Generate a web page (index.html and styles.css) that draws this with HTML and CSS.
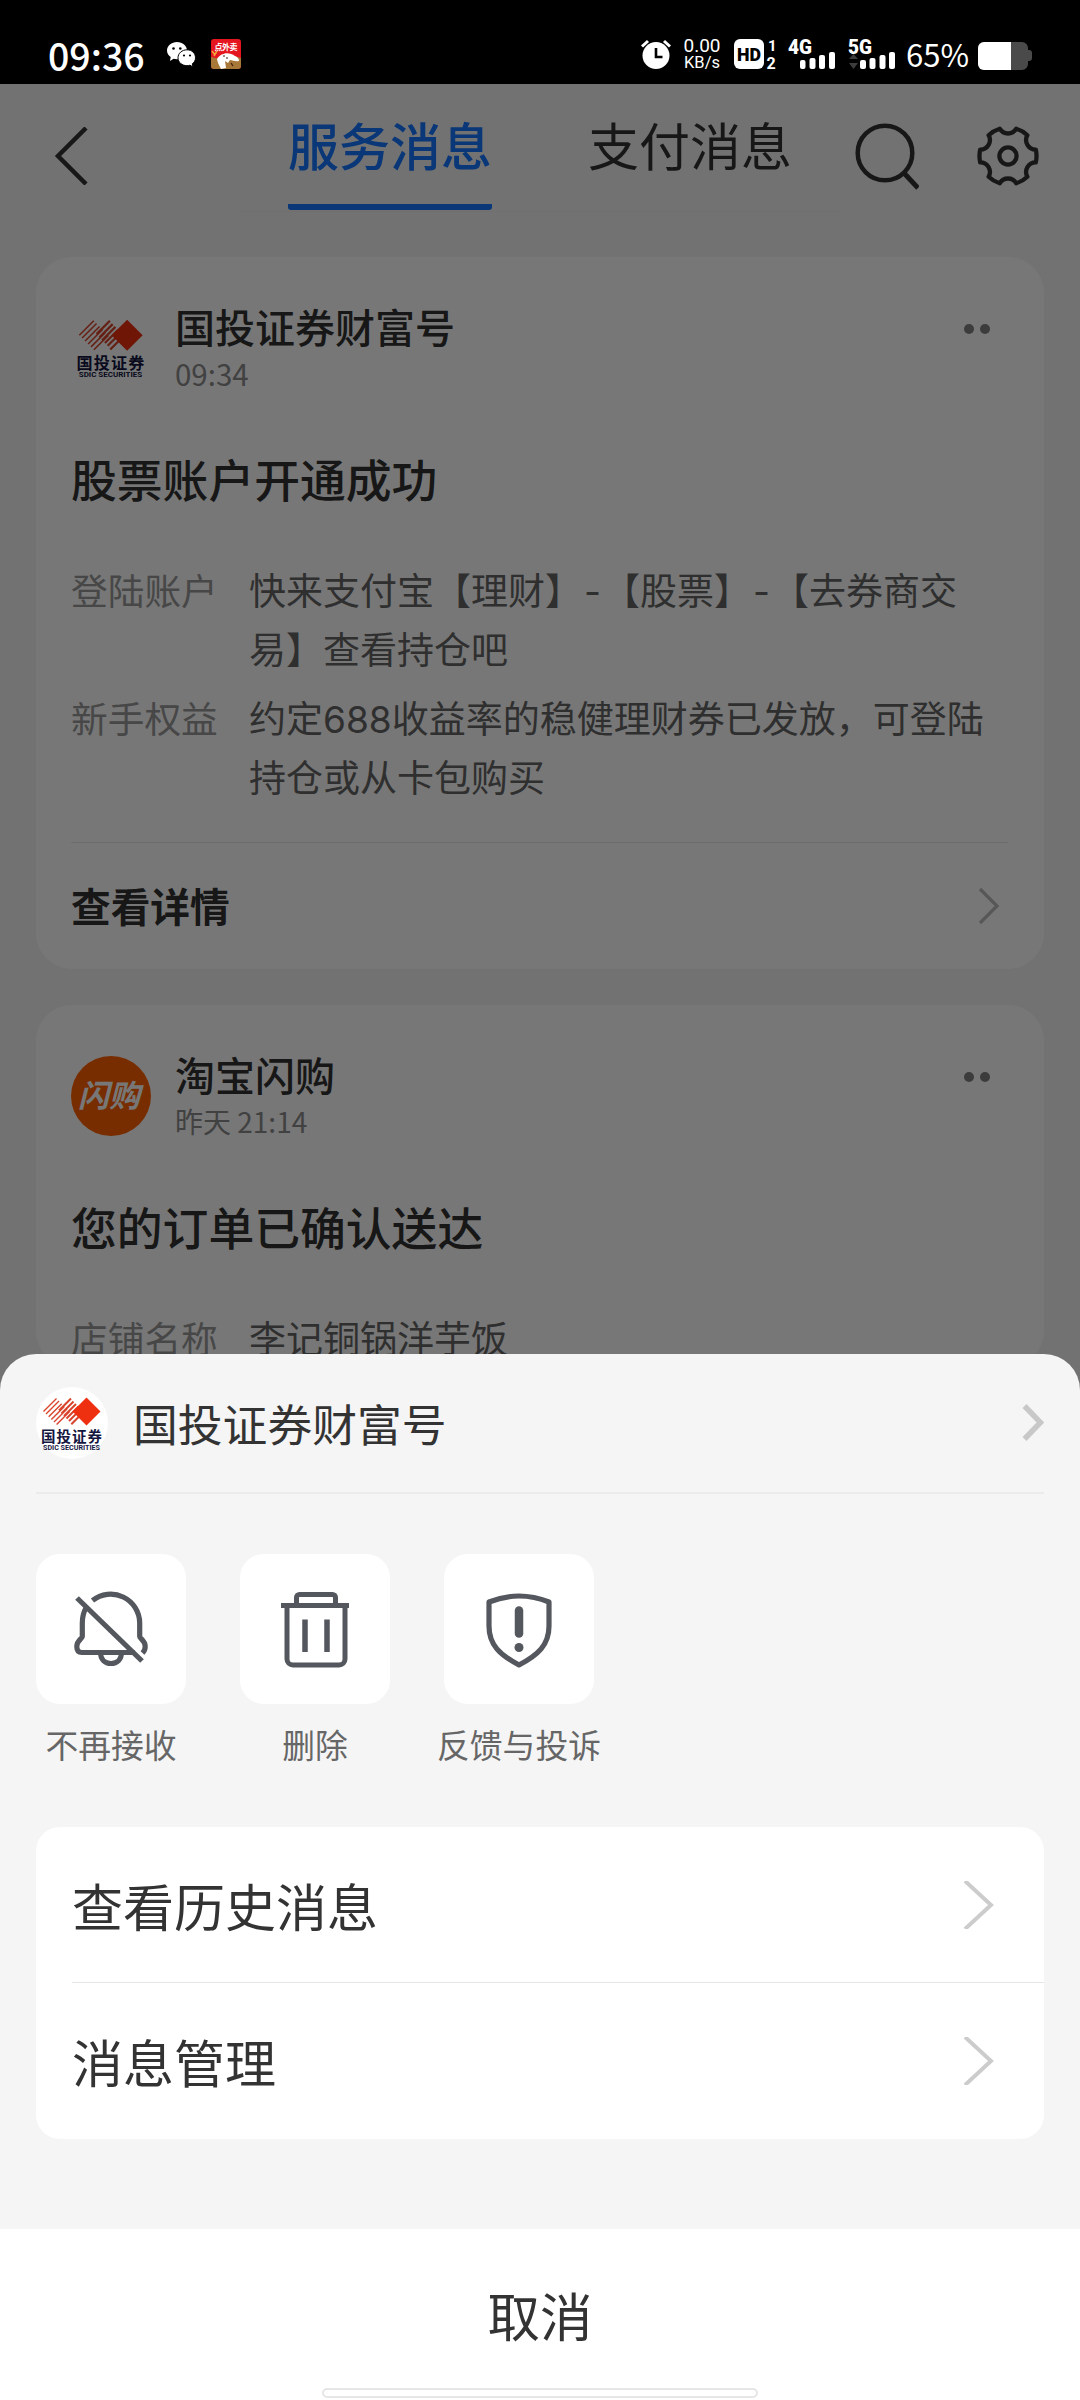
FILE: index.html
```html
<!DOCTYPE html>
<html lang="zh-CN">
<head>
<meta charset="utf-8">
<title>服务消息</title>
<link rel="stylesheet" href="styles.css">
</head>
<body>
<svg class="defs" width="0" height="0">
  <defs>
    <symbol id="sdic" viewBox="0 0 72 72">
      <circle cx="36" cy="36" r="36" fill="#fff"/>
      <g stroke="#d9452c" stroke-width="1.4" fill="none">
        <path d="M7.5 24.5l13-13M10 27l13-13M12.7 29.7l13-13M15.4 32.4l13-13M18 35l13-13M20.6 37.6l13-13"/>
        <path d="M23 23.500l12-12M25.500 26.500l12-12M28 29l12-12M30.500 31.500l12-12M33 34l10-10M35.300 37.300l9-9" stroke-width="2"/>
      </g>
      <path d="M50.500 10.500l14 14-14 14-14-14z" fill="#ee2f10"/>
      <text x="5" y="54.500" font-size="14.500" font-weight="600" textLength="61" fill="#14163f">国投证券</text>
      <text class="latin" x="7" y="62.500" font-size="7" font-weight="700" textLength="57" lengthAdjust="spacingAndGlyphs" fill="#14163f">SDIC SECURITIES</text>
    </symbol>
  </defs>
</svg>
<div class="screen">
  <header class="status">
    <span class="clock">09:36</span>
    <svg class="wechat" width="29" height="26" viewBox="0 0 29 26">
      <path fill="#fff" d="M10 0C4.500 0 0 3.700 0 8.500c0 2.700 1.500 5 3.700 6.600L3 19l3.600-2.200c1 .3 2.200.4 3.400.4C15.500 17.200 20 13.300 20 8.500S15.500 0 10 0z"/>
      <path fill="#fff" stroke="#000" stroke-width="1" d="M20 7.800c-5 0-9 3.500-9 8s4 7.900 9 7.900c1 0 2-.2 3-.5l3 1.800-.7-3.200c2-1.400 3.200-3.500 3.200-6 0-4.500-3.500-8-8.500-8z"/>
      <g fill="#000"><circle cx="6.500" cy="6.500" r="1.300"/><circle cx="13.300" cy="6.500" r="1.300"/><circle cx="17" cy="13.500" r="1.100"/><circle cx="23" cy="13.500" r="1.100"/></g>
    </svg>
    <svg class="takeout" width="30" height="30" viewBox="0 0 30 30">
      <rect width="30" height="30" rx="3" fill="#e5151f"/>
      <path d="M0 18l9 2 14-3 7 2v8a3 3 0 0 1-3 3H3a3 3 0 0 1-3-3z" fill="#a87838"/>
      <path d="M6 20c3-6 12-8 18-3 3 1 4 3 4 5-4 1-6-1-9-1l-2 3-3-2 1 7-5 1-3-6z" fill="#fff"/>
      <path d="M3 17l3-5M1 12l3 4" stroke="#f3a53b" stroke-width="1.500"/>
      <path d="M15 19h2M20 24l2 3M12 17h2" stroke="#421a18" stroke-width="1.200"/>
      <text x="3.500" y="11" font-size="8" font-weight="700" textLength="23" fill="#fff">点外卖</text>
    </svg>
    <div class="indicators">
      <svg width="30" height="30" viewBox="0 0 30 30">
        <circle cx="15" cy="16.500" r="13.500" fill="#fff"/>
        <path d="M1 7.500l6-5.500M29 7.500L23 2" stroke="#fff" stroke-width="3"/>
        <path d="M15 9v9h6.500" fill="none" stroke="#000" stroke-width="2.600"/>
      </svg>
      <div class="speed"><span>0.00</span><span>KB/s</span></div>
      <svg class="hd" width="44" height="34" viewBox="0 -1 44 34">
        <rect x="0" y="1" width="30" height="30" rx="6" fill="#fff"/>
        <text class="latin" x="3" y="22.500" font-size="18.500" font-weight="900" textLength="24" lengthAdjust="spacingAndGlyphs" fill="#000">HD</text>
        <text class="latin" x="34" y="13" font-size="15" font-weight="700" fill="#fff">1</text>
        <text class="latin" x="32.500" y="31" font-size="16" font-weight="700" fill="#fff">2</text>
      </svg>
      <svg class="net4" width="48" height="34" viewBox="0 -1 48 34">
        <text class="latin" x="0" y="15.500" font-size="20" font-weight="900" textLength="24" lengthAdjust="spacingAndGlyphs" fill="#fff">4G</text>
        <g fill="#fff"><rect x="12" y="22" width="5.500" height="9" rx="2"/><rect x="21.500" y="20" width="6" height="11" rx="2"/><rect x="31" y="17" width="6" height="14" rx="2"/><rect x="41" y="14" width="6" height="17" rx="2"/></g>
      </svg>
      <svg class="net5" width="48" height="34" viewBox="0 -1 48 34">
        <text class="latin" x="0" y="15.500" font-size="20" font-weight="900" textLength="24" lengthAdjust="spacingAndGlyphs" fill="#fff">5G</text>
        <path d="M1 21l4.500-5 4.500 5zM1 25h9l-4.500 6z" fill="#3c3c3c"/>
        <g fill="#fff"><rect x="12" y="22" width="6" height="9" rx="2"/><rect x="21.500" y="20" width="6" height="11" rx="2"/><rect x="31.500" y="17" width="6" height="14" rx="2"/><rect x="41" y="14" width="6" height="17" rx="2"/></g>
      </svg>
      <span class="percent">65%</span>
      <svg class="battery" width="54" height="28" viewBox="0 0 54 28">
        <path d="M6 0h38a6 6 0 0 1 6 6v2h1a3 3 0 0 1 3 3v5a3 3 0 0 1-3 3h-1v3a6 6 0 0 1-6 6H6a6 6 0 0 1-6-6V6a6 6 0 0 1 6-6z" fill="#4a4a4a"/>
        <path d="M6 0h27v28H6a6 6 0 0 1-6-6V6a6 6 0 0 1 6-6z" fill="#fff"/>
      </svg>
    </div>
  </header>

  <main class="app">
    <nav class="nav">
      <svg class="back" width="34" height="58" viewBox="0 0 34 58"><path d="M32 1L4 29l28 28" fill="none" stroke="#333" stroke-width="4.500"/></svg>
      <div class="tabs">
        <span class="tab active">服务消息</span>
        <span class="tab">支付消息</span>
      </div>
      <svg class="search" width="64" height="68" viewBox="0 0 64 68"><circle cx="30" cy="30" r="27.300" fill="none" stroke="#333" stroke-width="4.500"/><path d="M49 50l14 15" stroke="#333" stroke-width="5"/></svg>
      <svg class="gear" width="64" height="64" viewBox="-32 -32 64 64"><g fill="none" stroke="#333" stroke-width="4.300" stroke-linejoin="round">
        <path d="M27.800-6.400A28.500 28.500 0 0 1 27.800 6.400A9.600 9.600 0 0 0 19.400 20.800A28.500 28.500 0 0 1 8.300 27.300A9.600 9.600 0 0 0-8.300 27.300A28.500 28.500 0 0 1-19.400 20.800A9.600 9.600 0 0 0-27.800 6.400A28.500 28.500 0 0 1-27.800-6.400A9.600 9.600 0 0 0-19.400-20.800A28.500 28.500 0 0 1-8.300-27.300A9.600 9.600 0 0 0 8.300-27.300A28.500 28.500 0 0 1 19.400-20.800A9.600 9.600 0 0 0 27.800-6.400z"/>
        <circle r="8.600"/></g></svg>
    </nav>

    <section class="feed">
      <article class="card">
        <div class="card-head">
          <svg class="avatar" width="80" height="80"><use href="#sdic"/></svg>
          <div class="who"><h2 class="name">国投证券财富号</h2><time class="time clock-only">09:34</time></div>
          <div class="more"><i class="dot"></i><i class="dot"></i></div>
        </div>
        <h3 class="title">股票账户开通成功</h3>
        <dl class="rows">
          <dt class="label">登陆账户</dt>
          <dd class="value">快来支付宝【理财】<span class="dash">-</span>【股票】<span class="dash">-</span>【去券商交<br>易】查看持仓吧</dd>
          <dt class="label">新手权益</dt>
          <dd class="value">约定<span class="num">688</span>收益率的稳健理财券已发放，可登陆<br>持仓或从卡包购买</dd>
        </dl>
        <div class="detail">
          <span class="detail-text">查看详情</span>
          <svg width="22" height="38" viewBox="0 0 22 38"><path d="M2 2l17 17L2 36" fill="none" stroke="#bbb" stroke-width="3.200"/></svg>
        </div>
      </article>
      <article class="card">
        <div class="card-head">
          <span class="avatar shangou">闪购</span>
          <div class="who"><h2 class="name">淘宝闪购</h2><time class="time">昨天 21:14</time></div>
          <div class="more"><i class="dot"></i><i class="dot"></i></div>
        </div>
        <h3 class="title">您的订单已确认送达</h3>
        <dl class="rows">
          <dt class="label">店铺名称</dt>
          <dd class="value">李记铜锅洋芋饭</dd>
        </dl>
      </article>
    </section>
  </main>

  <div class="mask"></div>

  <aside class="sheet">
    <div class="sheet-head">
      <svg width="72" height="72"><use href="#sdic"/></svg>
      <span class="sheet-name">国投证券财富号</span>
      <svg class="sheet-arrow" width="22" height="38" viewBox="0 0 22 38"><path d="M2.500 2l16 16.500L2.500 35" fill="none" stroke="#c8c8c8" stroke-width="5.500"/></svg>
    </div>
    <div class="actions">
      <div class="action">
        <div class="tile">
          <svg width="78" height="80" viewBox="0 0 78 80"><g fill="none" stroke="#54575d" stroke-width="5.200">
            <path d="M20.500 11.600A29 29 0 0 1 67.700 34v13.500c0 2 5.500 4 5.500 10 0 3-.7 4.500-2.700 6.500"/>
            <path d="M14.500 18C11.500 23 10.300 28 10.300 34v13.500c0 2-5.500 4-5.500 10 0 4 2 6 5 6h53"/>
            <path d="M28.500 63.500c0 7 4.500 11 10.500 11s10.500-4 10.500-11"/>
            <path d="M5 9l65 63"/></g></svg>
        </div>
        <span class="caption">不再接收</span>
      </div>
      <div class="action">
        <div class="tile">
          <svg width="78" height="80" viewBox="0 0 78 80"><g fill="none" stroke="#54575d" stroke-width="5">
            <path d="M5 16.500h68M20.500 16V8.500a3 3 0 0 1 3-3h33a3 3 0 0 1 3 3V16"/>
            <path d="M11 17v53a6 6 0 0 0 6 6h46a6 6 0 0 0 6-6V17"/>
            <path d="M29 30.500v32.500M51 30.500v32.500" stroke-width="5.500"/></g></svg>
        </div>
        <span class="caption">删除</span>
      </div>
      <div class="action">
        <div class="tile">
          <svg width="78" height="80" viewBox="0 0 78 80"><g fill="none" stroke="#54575d" stroke-width="5.200" stroke-linejoin="round">
            <path d="M9 13Q24 7 39 7T69 13V37C69 56 58 66 39 76C20 66 9 56 9 37z"/>
            <path d="M39 21.500v23" stroke-width="8.500" stroke-linecap="round"/></g><circle cx="39" cy="58.500" r="4.500" fill="#54575d"/></svg>
        </div>
        <span class="caption">反馈与投诉</span>
      </div>
    </div>
    <div class="menu">
      <div class="menu-row"><span>查看历史消息</span><svg width="30" height="48" viewBox="0 0 30 48"><path d="M1 0l26 24L1 48" fill="none" stroke="#ccc" stroke-width="4"/></svg></div>
      <div class="menu-row"><span>消息管理</span><svg width="30" height="48" viewBox="0 0 30 48"><path d="M1 0l26 24L1 48" fill="none" stroke="#ccc" stroke-width="4"/></svg></div>
    </div>
    <div class="cancel"><span>取消</span><i class="home-bar"></i></div>
  </aside>
</div>
</body>
</html>
```
FILE: styles.css
```css
* { box-sizing: border-box; }
body, h2, h3, dl, dd { margin: 0; }
body {
  background: #f5f5f5;
  color: #333;
  font-family: "Noto Sans CJK SC", sans-serif;
}
svg { display: block; flex: none; }
.defs { position: absolute; }
.latin { font-family: Roboto, sans-serif; }
.screen {
  position: relative;
  width: 1080px;
  height: 2400px;
  overflow: hidden;
}

/* Status bar */
.status {
  display: flex;
  align-items: flex-start;
  height: 84px;
  padding: 39px 48px 0 48px;
  background: #000;
  color: #fff;
}
.clock { width: 119px; font-size: 37.5px; font-weight: 500; line-height: 31px; white-space: nowrap; }
.wechat { margin: 3px 15px 0 0; }
.indicators { display: flex; margin-left: auto; }
.indicators svg { overflow: visible; }
.speed {
  display: flex;
  flex-direction: column;
  align-items: center;
  width: 38px;
  margin: -2px 12px 0 12px;
  font-family: Roboto, sans-serif;
  font-size: 19px;
  line-height: 17px;
  white-space: nowrap;
}
.speed span + span { font-size: 16.5px; }
.hd { margin: -2px 10px 0 1px; }
.net4 { margin: -2px 12px 0 0; }
.net5 { margin: -2px 10px 0 0; }
.percent { width: 72px; font-size: 31px; line-height: 29px; }
.battery { margin-top: 3px; }

/* Navigation */
.app { height: 2316px; }
.nav {
  display: flex;
  height: 173px;
  background: linear-gradient(#efefef, #efefef) 240px 127px / 600px 1px no-repeat;
}
.back { margin: 43px 0 0 54px; }
.tabs { display: flex; gap: 96px; margin-left: 200px; }
.tab {
  width: 204px;
  height: 126px;
  padding-top: 23px;
  font-size: 51px;
  line-height: 74px;
  white-space: nowrap;
}
.tab.active {
  color: #1677ff;
  font-weight: 500;
  background: linear-gradient(#1677ff, #1677ff) bottom / 100% 6px no-repeat;
  border-radius: 0 0 3px 3px;
}
.search { margin: 39px 0 0 63px; }
.gear { margin: 40px 0 0 57px; }

/* Message cards */
.feed { display: flex; flex-direction: column; gap: 36px; padding: 0 36px; }
.card { padding: 51px 36px 0 35px; border-radius: 36px; background: #fff; }
.card-head { display: flex; height: 80px; }
.avatar { width: 80px; height: 80px; }
.shangou {
  border-radius: 50%;
  background: #ff6000;
  color: #fff;
  font-size: 31px;
  font-weight: 700;
  font-style: italic;
  line-height: 76px;
  text-align: center;
  text-indent: -4px;
}
.who { margin-left: 24px; }
.name { font-size: 40px; font-weight: 500; line-height: 40px; margin-top: -2px; }
.time { display: block; margin-top: 7px; font-size: 28px; line-height: 40px; color: #8c8c8c; }
.clock-only { font-size: 29.5px; }
.more { display: flex; gap: 6px; margin: 16px 18px 0 auto; }
.dot { width: 10px; height: 10px; border-radius: 50%; background: #808080; }
.title { margin-top: 57px; font-size: 45.8px; font-weight: 500; line-height: 66px; }
.rows {
  display: grid;
  grid-template-columns: 178px 1fr;
  row-gap: 10px;
  margin-top: 49px;
  font-size: 37px;
  line-height: 59px;
}
.label { font-size: 36.7px; color: #999; }
.value { color: #666; white-space: nowrap; }
.dash, .num { font-family: Inter, sans-serif; line-height: 1; }
.dash { display: inline-block; width: 21px; text-align: center; }
.detail {
  display: flex;
  align-items: center;
  justify-content: space-between;
  height: 127px;
  margin-top: 36px;
  padding-right: 8px;
  border-top: 1px solid #e9e9e9;
  font-size: 39.7px;
  font-weight: 700;
}
.detail-text { margin-top: -4px; }

/* Dimming layer and bottom sheet */
.mask { position: absolute; inset: 84px 0 0 0; background: rgba(0, 0, 0, .533); }
.sheet {
  position: absolute;
  inset: 1354px 0 0 0;
  display: flex;
  flex-direction: column;
  border-radius: 36px 36px 0 0;
  background: #f5f5f5;
}
.sheet-head {
  display: flex;
  align-items: center;
  height: 140px;
  margin: 0 36px;
  border-bottom: 2px solid #ebebeb;
}
.sheet-name { margin-left: 25px; font-size: 44.8px; line-height: 64px; }
.sheet-arrow { margin-left: auto; }
.actions { display: flex; gap: 54px; padding: 60px 36px 0; height: 333px; }
.action { display: flex; flex-direction: column; align-items: center; width: 150px; }
.tile {
  display: flex;
  align-items: center;
  justify-content: center;
  width: 150px;
  height: 150px;
  border-radius: 24px;
  background: #fff;
}
.caption { margin-top: 16px; font-size: 32.8px; line-height: 48px; color: #666; white-space: nowrap; }
.menu { margin: 0 36px; border-radius: 24px; background: #fff; }
.menu-row {
  display: flex;
  align-items: center;
  justify-content: space-between;
  height: 155px;
  margin-left: 36px;
  padding-right: 50px;
  font-size: 51px;
  line-height: 74px;
}
.menu-row + .menu-row { height: 157px; padding-bottom: 1px; border-top: 1px solid #e5e5e5; }
.cancel {
  display: flex;
  flex-direction: column;
  align-items: center;
  justify-content: space-between;
  height: 171px;
  margin-top: auto;
  padding: 48px 0 2px;
  background: #fff;
  font-size: 52.5px;
  line-height: 74px;
}
.home-bar { width: 436px; height: 10px; border: 2px solid #e6e6e6; border-radius: 5px; background: #fff; }
```
